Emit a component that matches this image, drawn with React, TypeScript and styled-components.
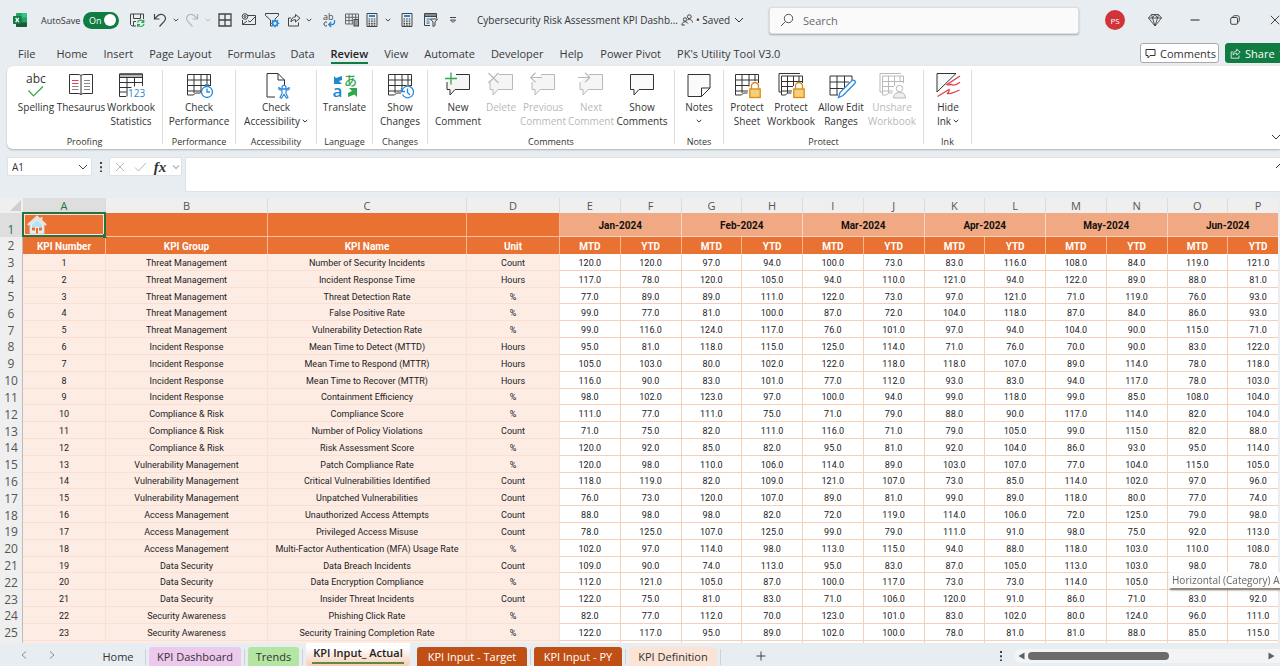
import React from "react";
import styled, { createGlobalStyle, css } from "styled-components";

const UI = `"Open Sans", "Noto Sans", sans-serif`;
const CELL = `Roboto, "Liberation Sans", sans-serif`;

const Global = createGlobalStyle`
  *, *::before, *::after { box-sizing: border-box; }
  body { margin: 0; overflow: hidden; }
  button, input { font: inherit; color: inherit; }
  button { border: 0; padding: 0; background: none; white-space: nowrap; }
  svg { display: block; flex: none; overflow: visible; }
`;

const Shell = styled.div`
  display: flex;
  flex-direction: column;
  height: 100vh;
  overflow: hidden;
  background: #e8edf1;
  color: #333;
  font-family: ${UI};
`;

/* ---------- title bar ---------- */

const TitleBar = styled.header`
  display: flex;
  align-items: center;
  flex: none;
  height: 40px;
  overflow: hidden;
  font-size: 10px;
`;

const ToolButton = styled.button<{ $w: number; $h?: number; $muted?: boolean }>`
  display: flex;
  align-items: center;
  justify-content: center;
  flex: none;
  width: ${(p) => p.$w}px;
  height: ${(p) => p.$h || 24}px;
  color: ${(p) => (p.$muted ? "#b4b8bb" : "#444")};
`;

const AutoSave = styled.label`
  display: flex;
  align-items: center;
  flex: none;
  width: 86px;
  font-size: 9px;
`;

const AutoSaveText = styled.span`
  width: 43px;
  padding-left: 1px;
`;

const Switch = styled.span`
  position: relative;
  display: flex;
  align-items: center;
  width: 36px;
  height: 17px;
  padding-left: 6px;
  border-radius: 9px;
  background: #107c41;
  color: #fff;
  &::after {
    content: "";
    width: 12px;
    height: 12px;
    margin-left: auto;
    margin-right: 3px;
    border-radius: 50%;
    background: #fff;
  }
  input {
    position: absolute;
    inset: 0;
    margin: 0;
    opacity: 0;
  }
`;

const DocTitle = styled.div`
  flex: none;
  width: 203px;
  margin-left: 11px;
  white-space: nowrap;
`;

const SavedButton = styled.button`
  display: flex;
  align-items: center;
  flex: none;
  gap: 4px;
  width: 66px;
  margin-left: 2px;
`;

const SearchBox = styled.label`
  display: flex;
  align-items: center;
  flex: 0 1 310px;
  gap: 9px;
  height: 27px;
  margin-left: 7px;
  padding: 0 10px;
  border: 1px solid #dcdfe2;
  border-radius: 3px;
  background: #fafafa;
  box-shadow: 0 1px 2px rgba(0, 0, 0, 0.3);
  color: #555;
  font-size: 11px;
  input {
    flex: 1;
    min-width: 0;
    padding: 0;
    border: 0;
    outline: 0;
    background: none;
  }
  input::placeholder { color: #6a6a6a; opacity: 1; }
`;

const WindowControls = styled.div`
  display: flex;
  flex: none;
  margin: 0 -15px 0 auto;
`;

const Avatar = styled.span`
  display: grid;
  place-items: center;
  width: 20px;
  height: 20px;
  border-radius: 50%;
  background: #d13438;
  color: #fff;
  font-size: 8px;
`;

/* ---------- ribbon tabs ---------- */

const TabRow = styled.nav`
  display: flex;
  align-items: center;
  flex: none;
  height: 26px;
  padding-left: 18px;
  overflow: hidden;
`;

const RibbonTab = styled.button<{ $active?: boolean; $gap: number }>`
  position: relative;
  flex: none;
  height: 24px;
  margin-right: ${(p) => p.$gap}px;
  line-height: 26px;
  font-size: 11px;
  font-weight: ${(p) => (p.$active ? 600 : 400)};
  color: ${(p) => (p.$active ? "#222" : "#3a3a3a")};
  ${(p) =>
    p.$active &&
    css`
      &::after {
        content: "";
        position: absolute;
        left: 0;
        right: 0;
        bottom: 1px;
        height: 2px;
        background: #107c41;
      }
    `}
`;

const TabActions = styled.div`
  display: flex;
  flex: none;
  gap: 6px;
  margin-left: auto;
  margin-right: -10px;
`;

const ActionButton = styled.button<{ $primary?: boolean }>`
  display: flex;
  align-items: center;
  gap: 4px;
  height: 20px;
  width: ${(p) => (p.$primary ? 65 : 79)}px;
  padding: 0 4px;
  border: 1px solid ${(p) => (p.$primary ? "#107c41" : "#a8a8a8")};
  border-radius: 3px;
  background: ${(p) => (p.$primary ? "#107c41" : "#fff")};
  color: ${(p) => (p.$primary ? "#fff" : "#333")};
  font-size: 11px;
`;

/* ---------- ribbon ---------- */

const Ribbon = styled.section`
  display: flex;
  flex: none;
  height: 83px;
  margin-left: 7px;
  border-radius: 6px 0 0 6px;
  background: #fff;
  box-shadow: 0 1px 2px rgba(0, 0, 0, 0.25);
`;

const Group = styled.div<{ $w: number }>`
  display: flex;
  flex-direction: column;
  justify-content: space-between;
  flex: none;
  position: relative;
  width: ${(p) => p.$w}px;
  padding-top: 6px;
  &::after {
    content: "";
    position: absolute;
    right: 0;
    top: 4px;
    bottom: 5px;
    width: 1px;
    background: #dcdcdc;
  }
`;

const GroupButtons = styled.div<{ $pad: number }>`
  display: flex;
  padding-left: ${(p) => p.$pad}px;
`;

const GroupName = styled.div`
  padding-right: 1px;
  text-align: center;
  font-size: 9px;
  line-height: 14px;
`;

const Command = styled.button<{ $w: number }>`
  display: flex;
  flex-direction: column;
  align-items: center;
  flex: none;
  width: ${(p) => p.$w}px;
  font-size: 10px;
  line-height: 14px;
  color: #333;
  &:disabled { color: #b9b9b9; }
`;

const CommandLine = styled.span`
  display: flex;
  align-items: center;
  gap: 2px;
  min-height: 14px;
`;

const RibbonEnd = styled.div`
  display: flex;
  align-items: flex-end;
  margin: 0 -1px 7px auto;
`;

/* ---------- formula bar ---------- */

const FormulaBar = styled.section`
  display: flex;
  flex: none;
  align-items: flex-start;
  margin-top: 8px;
  padding-left: 7px;
`;

const Field = styled.div<{ $w: number }>`
  display: flex;
  align-items: center;
  flex: none;
  width: ${(p) => p.$w}px;
  height: 19px;
  border: 1px solid #dfe2e5;
  border-radius: 2px;
  background: #fff;
`;

const NameInput = styled.input`
  flex: 1;
  min-width: 0;
  padding: 0 0 0 4px;
  border: 0;
  outline: 0;
  background: none;
  font-size: 10px;
`;

const FxButton = styled.button`
  width: 20px;
  font: italic 700 15px/16px "Liberation Serif", serif;
`;

const FormulaBox = styled.div`
  position: relative;
  display: flex;
  flex: 1;
  height: 35px;
  margin-left: 3px;
  border: 1px solid #dfe2e5;
  border-right: 0;
  border-radius: 2px 0 0 2px;
  background: #fff;
  input {
    flex: 1;
    border: 0;
    outline: 0;
    background: none;
    font-size: 11px;
  }
  button { align-self: flex-start; margin: 5px -5px 0 0; }
`;

/* ---------- sheet ---------- */

const SheetArea = styled.main`
  flex: 1;
  min-height: 0;
  margin: 6px 2px 0 0;
  overflow: hidden;
  background: #fff;
`;

const Sheet = styled.table`
  width: calc(100% + 11px);
  height: 100%;
  table-layout: fixed;
  border-collapse: separate;
  border-spacing: 0;
  font-family: ${CELL};
  font-size: 9px;
  line-height: 12px;
  color: #222;
  td, th { padding: 0; text-align: center; vertical-align: middle; white-space: nowrap; }
  tbody td, tbody th { padding-top: 2px; }
`;

const Col = styled.col<{ $w?: number }>`
  width: ${(p) => (p.$w ? `${p.$w}px` : "auto")};
`;

const ColHead = styled.th<{ $selected?: boolean }>`
  height: 15px;
  border-right: 1px solid #dcdcdc;
  background: ${(p) => (p.$selected ? "#dedede" : "#efefef")};
  color: ${(p) => (p.$selected ? "#217346" : "#555")};
  font: 400 11px/14px ${UI};
`;

const Corner = styled.th`
  background: #efefef;
  svg { margin: 0 2px 0 auto; }
`;

const RowHead = styled.th<{ $selected?: boolean }>`
  border-right: 1px solid #bdbdbd;
  background: ${(p) => (p.$selected ? "#dedede" : "#efefef")};
  color: ${(p) => (p.$selected ? "#217346" : "#555")};
  font: 400 12px/14px ${UI};
  &&& { vertical-align: ${(p) => (p.$selected ? "bottom" : "middle")}; }
`;

const Banner = styled.td`
  position: relative;
  height: 24px;
  border-right: 1px solid #f5b893;
  border-bottom: 1px solid #f5c4a6;
  background: #e97132;
  a { display: block; width: 20px; margin-left: 4px; }
`;

const Selection = styled.span`
  position: absolute;
  inset: -1px;
  border: 2px solid #217346;
  box-shadow: inset 0 0 0 1px #fbe3d6;
  &::after {
    content: "";
    position: absolute;
    right: -3px;
    bottom: -3px;
    width: 4px;
    height: 4px;
    background: #217346;
  }
`;

const Month = styled.th`
  height: 24px;
  border-right: 1px solid #f9d6c2;
  border-bottom: 1px solid #f9d6c2;
  background: #f1a983;
  color: #111;
  font-size: 10px;
  &&& { padding-top: 2px; }
`;

const FieldHead = styled.th`
  height: 17px;
  border-right: 1px solid #f5b893;
  background: #e97132;
  color: #fff;
  font-size: 10px;
  &&& { padding-top: 2px; }
`;

const Label = styled.td`
  border-right: 1px solid #fbe0d2;
  border-bottom: 1px solid #fbe0d2;
  background: #fdece4;
`;

const Value = styled.td`
  border-right: 1px solid #f7ceb6;
  border-bottom: 1px solid #f7ceb6;
`;

const Stub = styled.tr`
  height: 2px;
  font-size: 0;
  line-height: 0;
  &&& > * { padding: 0; border-bottom: 0; }
`;

const Tooltip = styled.div`
  position: fixed;
  left: calc(100vw - 111px);
  bottom: 78px;
  width: 130px;
  padding-left: 3px;
  background: #fcfcfc;
  box-shadow: 1px 2px 2px rgba(0, 0, 0, 0.5);
  color: #666;
  font-size: 10px;
  line-height: 16px;
  white-space: nowrap;
`;

/* ---------- sheet tabs ---------- */

const BottomBar = styled.footer`
  display: flex;
  align-items: flex-end;
  flex: none;
  height: 23px;
  padding-left: 10px;
  overflow: hidden;
`;

const NavArrow = styled.button`
  display: grid;
  place-items: center;
  width: 28px;
  height: 22px;
  color: #8a8f94;
`;

const SheetTabs = styled.div`
  display: flex;
  align-items: flex-end;
  gap: 7px;
  margin-left: 28px;
`;

const SheetTab = styled.button<{ $w: number; $bg?: string; $fg?: string }>`
  position: relative;
  width: ${(p) => p.$w}px;
  height: 19px;
  border-radius: 3px 3px 0 0;
  background: ${(p) => p.$bg || "transparent"};
  color: ${(p) => p.$fg || "#333"};
  font-size: 11px;
  line-height: 19px;
  &::after {
    content: "";
    position: absolute;
    right: -4px;
    top: 2px;
    bottom: 1px;
    width: 1px;
    background: #cdd2d7;
  }
`;

const ActiveSheetTab = styled.button`
  width: 104px;
  height: 23px;
  padding: 1px 6px 2px;
  border-radius: 0 0 4px 4px;
  background: linear-gradient(#fff 20%, #f6cdb6);
  color: #222;
  font-size: 11px;
  font-weight: 600;
  line-height: 18px;
  span {
    display: block;
    border-bottom: 2px solid #5f8a3c;
  }
`;

const ScrollArea = styled.div`
  display: flex;
  align-items: flex-end;
  justify-content: flex-end;
  flex: 1;
`;

const ScrollTrack = styled.div`
  display: flex;
  align-items: center;
  flex: 0 1 266px;
  height: 14px;
  margin-bottom: 3px;
  padding: 0 5px 0 4px;
  border-radius: 7px 0 0 7px;
  background: #f3f4f5;
  color: #606060;
`;

const ScrollThumb = styled.div`
  width: 55%;
  height: 8px;
  margin: 0 auto 0 3px;
  border-radius: 4px;
  background: #6b6b6b;
`;

/* ---------- icons ---------- */

type P = { children: React.ReactNode; w?: number; h?: number; vb?: string };
const Svg = ({ children, w = 16, h = 16, vb }: P) => (
  <svg width={w} height={h} viewBox={vb || `0 0 ${w} ${h}`} fill="none" stroke="currentColor" strokeWidth="1" aria-hidden="true">
    {children}
  </svg>
);
const Big = ({ children }: { children: React.ReactNode }) => (
  <Svg w={28} h={28}>{children}</Svg>
);

const Caret = ({ w = 6 }: { w?: number }) => (
  <Svg w={w} h={w} vb="0 0 6 6"><path d="M.7 1.8 3 4.1 5.3 1.8" /></Svg>
);
const Chevron = () => <Svg w={10} h={10}><path d="M1 3l4 4 4-4" /></Svg>;

const ExcelIcon = () => (
  <Svg w={14} h={14}>
    <g stroke="none">
      <rect x="3" y="0" width="11" height="14" rx="1" fill="#21a366" />
      <path d="M8.500 0H13a1 1 0 0 1 1 1v3.500H8.500z" fill="#33c481" />
      <path d="M3 4.500h5.500v5H3z" fill="#107c41" />
      <path d="M8.500 9.500H14V13a1 1 0 0 1-1 1H4a1 1 0 0 1-1-1V9.500z" fill="#185c37" />
      <rect x="0" y="3" width="8.500" height="8" rx=".8" fill="#107c41" />
    </g>
    <path d="M2.600 4.800 5.900 9.200M5.900 4.800 2.600 9.200" stroke="#fff" strokeWidth="1.300" />
  </Svg>
);
const SaveIcon = () => (
  <Svg>
    <path d="M7 14H3L1.500 12.500V2h13v5M4.500 2v4.500h7V2M4.500 14V9.500H7" />
    <path d="M8.500 10.500a3.200 3.200 0 0 1 6-.5M14.800 7.800V10.300h-2.500M15 12a3.200 3.200 0 0 1-6 .7M8.600 15v-2.500H11" stroke="#2fa84f" strokeWidth="1.200" />
  </Svg>
);
const UndoIcon = () => (
  <Svg><path d="M2.500 2v5h5M2.800 6.700 6 3.500c2-1.800 4.800-1.500 6.300.2 1.500 1.800 1.300 4.300-.3 6L7.500 14.500" strokeWidth="1.200" /></Svg>
);
const RedoIcon = () => (
  <Svg><path d="M13.500 2v5h-5M13.200 6.700 10 3.500C8 1.700 5.200 2 3.700 3.700 2.200 5.500 2.400 8 4 9.700l4.500 4.800" strokeWidth="1.200" /></Svg>
);
const BordersIcon = () => (
  <Svg w={14} h={14}><path d="M1 1h12v12H1zM7 1v12M1 7h12" strokeWidth="1.300" /></Svg>
);
const MailIcon = () => (
  <Svg>
    <path d="M7 3.500h7.500v9h-13V8M7 8.500l2 1.500 5.500-5.500M1.500 12.500 6 9" />
    <circle cx="4" cy="4.500" r="2.800" /><circle cx="4" cy="4.500" r="1" />
  </Svg>
);
const FilterIcon = () => (
  <Svg>
    <path d="M8 14H6.500V8L1.500 3.500v-2h13v2L11 7" />
    <circle cx="11" cy="11.300" r="2.400" stroke="#2b88d8" strokeWidth="1.600" />
    <path d="M11 7v1.500M11 14v1.600M6.800 11.300h1.500M13.700 11.300h1.600M8 8.300l1 1M13 13.300l1 1M14 8.300l-1 1M9 13.300l-1 1" stroke="#2b88d8" strokeWidth="1.300" />
  </Svg>
);
const ShareIcon = ({ s = 14 }: { s?: number }) => (
  <Svg w={s} h={s} vb="0 0 14 14">
    <path d="M4 5H1.500v8h10V9.500M8.500 1.500v2.300C5.500 4 4 6 4 9c1-1.700 2.500-2.400 4.500-2.300V9l4.500-3.800z" strokeLinejoin="round" />
  </Svg>
);
const AbcIcon = () => (
  <Svg>
    <g stroke="none" fill="currentColor" fontFamily="Open Sans" fontSize="9"><text x="2" y="8">ab</text></g>
    <path d="M6 10.300a2 2 0 1 0 0 3.400" />
    <path d="M13.500 8v2q0 2.500-2.500 2.500H8M10.200 10 7.700 12.500l2.500 2.500" stroke="#2b88d8" strokeWidth="1.300" />
  </Svg>
);
const SheetIcon = () => (
  <Svg>
    <path d="M1.500 2h13v5M1.500 2v10H9M1.500 5.300h13M1.500 8.600H9M5 2v10M8.300 2v10M11.600 2v5" stroke="#666" />
    <rect x="10" y="7.500" width="4.500" height="6.500" fill="#999" />
  </Svg>
);
const CalcIcon = () => (
  <Svg w={12} h={14}>
    <path d="M1 .5h10v13H1z" />
    <path d="M3 3h6" stroke="#2b88d8" strokeWidth="2" />
    <path d="M2.500 6h7M2.500 8.200h7M2.500 10.400h7M2.500 12.200h7" strokeWidth="1.200" strokeDasharray="1.600 1" />
  </Svg>
);
const FormIcon = () => (
  <Svg>
    <path d="M7 13.500H1.500v-12h12V6M1.500 4.500h12" /><path d="M2 3h11" strokeWidth="2" opacity=".6" />
    <path d="M3.500 7h4M3.500 9h3" stroke="#2b88d8" /><path d="M3.500 11h3" />
    <path d="M7.500 7h7l-2.500 3v3.500l-2 1V10z" fill="#e8edf1" />
  </Svg>
);
const MoreIcon = () => <Svg w={8} h={8}><path d="M1 1.500h6M1.500 4 4 6.500 6.500 4z" /></Svg>;
const PeopleIcon = () => (
  <Svg w={12} h={12}>
    <circle cx="4" cy="5.500" r="1.700" /><path d="M.8 11c.3-2.300 1.500-3.200 3.200-3.200S6.500 8.500 7 9.500M.8 11h3" />
    <circle cx="8.300" cy="2.700" r="1.900" /><path d="M6.500 6c1.800-1.200 4.600-.7 5 2.500" />
  </Svg>
);
const SearchIcon = () => (
  <Svg w={14} h={14}><circle cx="8.500" cy="5.500" r="4.200" /><path d="M5.500 8.500 1 13" /></Svg>
);
const DiamondIcon = () => (
  <Svg w={14} h={14}><path d="M3.500 1.500h7L13.500 5 7 13 .5 5zM.5 5h13M3.500 1.500 4.500 5 7 13 9.500 5l1-3.500M4.500 5 7 1.500 9.500 5" strokeWidth=".9" /></Svg>
);
const MinIcon = () => <Svg w={10} h={10}><path d="M.5 5h9" strokeWidth="1.200" /></Svg>;
const RestoreIcon = () => (
  <Svg w={10} h={10}><rect x=".7" y="2.500" width="6.800" height="6.800" rx="1.300" /><path d="M2.800 2.500V2q.2-1.300 1.500-1.300h3.200q1.800 0 1.800 1.800v3.200q0 1.300-1.800 1.500" /></Svg>
);
const CloseIcon = () => <Svg w={10} h={10}><path d="M.8.8l8.400 8.400M9.200.8.8 9.200" /></Svg>;
const CommentIcon = () => (
  <Svg w={11} h={11}><path d="M1 1.500h9v6H5L3 9.800V7.500H1z" strokeLinejoin="round" /></Svg>
);

const SpellingIcon = () => (
  <Big>
    <text x="14" y="11" textAnchor="middle" stroke="none" fill="currentColor" fontFamily="Open Sans" fontSize="12">abc</text>
    <path d="M6.500 18.500 11.500 24 21 14.500" stroke="#2fa84f" strokeWidth="1.200" />
  </Big>
);
const ThesaurusIcon = () => (
  <Big>
    <path d="M14 3.500q-1-1-3-1H2.500v19H11q2 0 3 1 1-1 3-1h8.500v-19H17q-2 0-3 1v19" />
    <path d="M5 8.500h6.500M5 11.500h6.500" stroke="#e0405a" strokeWidth="1.200" />
    <path d="M5 14.500h6.500M5 17.500h6.500M17 8.500h6M17 11.500h6M17 14.500h6M17 17.500h6" stroke="#888" />
  </Big>
);
const StatsIcon = () => (
  <Big>
    <path d="M2.500 2h23v3.500h-23z" fill="#b9b9b9" />
    <path d="M9 24.500H2.500V2h23v12M2.500 10.500h23M2.500 15.500h12M2.500 20h7M10 5.500v19M17.500 5.500v9" />
    <text x="11" y="25" stroke="none" fill="#2b88d8" fontFamily="Open Sans" fontSize="10">123</text>
  </Big>
);
const Grid = () => (
  <path d="M2.500 2.500h23M2.500 8h23M2.500 13.500h23M2.500 19H16M2.500 2.500V23h6l2-2h5M9 2.500V21M16 2.500V21M22 2.500V13M25.500 2.500V14" />
);
const PerfIcon = () => (
  <Big><Grid /><g stroke="#2b88d8" strokeWidth="1.300"><circle cx="22" cy="20" r="5.500" fill="#fff" /><path d="M22 16.500V20h3M20 12.800h4M22 13v1.500" /></g></Big>
);
const AccessIcon = () => (
  <Big>
    <path d="M13 25H5V1.500h11L22.500 8v5M16 1.500V8h6.500" />
    <g stroke="#2b88d8" strokeWidth="1.200" fill="#fff"><circle cx="22" cy="15.300" r="2" /><path d="M16.800 15.500 17 17.500l3 1v3l-2 4 1.500.8 2.500-4 2.500 4L26 25.500l-2-4v-3l3-1 .2-2-3 1.700h-4.400z" strokeLinejoin="round" /></g>
  </Big>
);
const TranslateIcon = () => (
  <Big>
    <g stroke="none">
      <text x="1.500" y="25" fill="#1e88d2" fontFamily="Open Sans" fontWeight="600" fontSize="17">a</text>
      <text x="13" y="13" fill="#2fa84f" fontFamily="Noto Sans CJK JP" fontWeight="500" fontSize="13">あ</text>
      <path d="M3 4l2 2 6-2v4L8 9l3 3H3z" fill="#1e88d2" />
      <path d="M26 16v9l-2.500-2.500L17 25v-4l4-2-3-3z" fill="#2fa84f" />
    </g>
  </Big>
);
const ChangesIcon = () => (
  <Big><Grid /><g stroke="#2b88d8" strokeWidth="1.300"><circle cx="21.500" cy="20" r="6.500" fill="#fff" stroke="none" /><path d="M15.500 16v3.500H19M16 19a5.800 5.800 0 1 1 .5 3.500M21.500 16.500v4l2.500 2.500" /></g></Big>
);
const Bubble = ({ mark }: { mark?: "plus" | "x" | "left" | "right" }) => (
  <Big>
    <path d={mark ? "M12 2.500h13.500v15H11L6 23v-5.500H3V10" : "M2.500 2.500h23v15H11L6 23v-5.500H2.500z"} fill={mark ? "#f5f5f5" : "#fafafa"} />
    {mark === "plus" && <path d="M1 6.500h12M7 .5v12" stroke="#2fa84f" strokeWidth="1.300" />}
    {mark === "x" && <path d="M1.500 1l10 10M11.500 1l-10 10" strokeWidth="1.200" />}
    {mark === "left" && <path d="M13 5.500H1.500M6.500.8 1.700 5.500 6.500 10.300" strokeWidth="1.200" />}
    {mark === "right" && <path d="M1 5.500h12M8 .8l4.800 4.700L8 10.300" strokeWidth="1.200" />}
  </Big>
);
const NotesIcon = () => (
  <Big><path d="M3 2.500h22V16l-8.500 8.500H3zM25 16h-8.500v8.500" fill="#fafafa" /></Big>
);
const Lock = () => (
  <g stroke="#d98a1c" strokeWidth="1.300"><path d="M18.500 17v-3a3.500 3.500 0 0 1 7 0v3" /><rect x="16.800" y="17" width="10.400" height="8.500" fill="#f7cf75" /></g>
);
const ProtectSheetIcon = () => (
  <Big><path d="M2.500 2.500h23V11M2.500 2.500V23h6l2-2h4M2.500 8h23M2.500 13.500H16M2.500 19H15M9 2.500V21M16 2.500v12M22 2.500V9" /><Lock /></Big>
);
const BookGrid = () => (
  <path d="M2 20V1.500h21M2 20h2.500M4.500 4h21v7M4.500 4v19h4l2-2h4M4.500 9.500h21M4.500 14.500H16M4.500 19H15M10.500 4v17M16.500 4v10M22 4v6" />
);
const ProtectBookIcon = () => <Big><BookGrid /><Lock /></Big>;
const RangesIcon = () => (
  <Big>
    <path d="M3 4h22v4M3 4v19h8M3 10h19M3 16.500h14M10 4v19M17.500 4v12" />
    <path d="M11.500 25.500l1.500-5L25 8.500q1.500-1 2.800.3 1.200 1.300 0 2.700L16 23.500z" fill="#fff" stroke="#2b88d8" strokeWidth="1.300" />
  </Big>
);
const UnshareIcon = () => (
  <Big><BookGrid /><circle cx="21.500" cy="16.500" r="3.200" fill="#fff" /><path d="M15.500 26c0-3.500 2-5.500 6-5.500s6 2 6 5.500z" fill="#eee" /></Big>
);
const InkIcon = () => (
  <Big>
    <path d="M3 1.500h19L3 20z" fill="#f7f7f7" />
    <path d="M26 4 13 12.500q3 .8 4-.3 3 2.500 9-2M3.500 24.500 15 17.500q1 .8-1.500 4 4 .5 12-3.500" stroke="#e0404a" strokeWidth="1.300" />
  </Big>
);

const HouseIcon = () => (
  <svg width="20" height="19" viewBox="0 0 20 19" aria-hidden="true">
    <path d="M3 9v9.500h14V9L10 3z" fill="#e3f1f7" stroke="#d8d8d8" />
    <path d="M5 9.500 10 5l5 4.500V12H5z" fill="#b8e4f2" />
    <path d="M.8 10 10 1.500 19.200 10M14.500 2v4" fill="none" stroke="#e8e4e0" strokeWidth="1.800" />
    <path d="M5 12.500h3v3H5zM12 12.500h3v3h-3z" fill="#e97132" /><path d="M9 13h2v5.500H9z" fill="#e97132" />
  </svg>
);

/* ---------- data ---------- */

const tabs: [string, number][] = [
  ["File", 21], ["Home", 16], ["Insert", 16], ["Page Layout", 16], ["Formulas", 15], ["Data", 16],
  ["Review", 16], ["View", 16], ["Automate", 16], ["Developer", 16], ["Help", 17], ["Power Pivot", 16],
  ["PK's Utility Tool V3.0", 0],
];

type Cmd = { w: number; icon: React.ReactNode; lines: string[]; caret?: boolean; off?: boolean };
const groups: { name: string; w: number; pad: number; items: Cmd[] }[] = [
  { name: "Proofing", w: 156, pad: 7, items: [
    { w: 44, icon: <SpellingIcon />, lines: ["Spelling"] },
    { w: 46, icon: <ThesaurusIcon />, lines: ["Thesaurus"] },
    { w: 54, icon: <StatsIcon />, lines: ["Workbook", "Statistics"] },
  ] },
  { name: "Performance", w: 73, pad: 0, items: [{ w: 72, icon: <PerfIcon />, lines: ["Check", "Performance"] }] },
  { name: "Accessibility", w: 81, pad: 0, items: [{ w: 80, icon: <AccessIcon />, lines: ["Check", "Accessibility"], caret: true }] },
  { name: "Language", w: 56, pad: 0, items: [{ w: 55, icon: <TranslateIcon />, lines: ["Translate"] }] },
  { name: "Changes", w: 55, pad: 0, items: [{ w: 54, icon: <ChangesIcon />, lines: ["Show", "Changes"] }] },
  { name: "Comments", w: 247, pad: 7, items: [
    { w: 46, icon: <Bubble mark="plus" />, lines: ["New", "Comment"] },
    { w: 40, icon: <Bubble mark="x" />, lines: ["Delete"], off: true },
    { w: 44, icon: <Bubble mark="left" />, lines: ["Previous", "Comment"], off: true },
    { w: 52, icon: <Bubble mark="right" />, lines: ["Next", "Comment"], off: true },
    { w: 50, icon: <Bubble />, lines: ["Show", "Comments"] },
  ] },
  { name: "Notes", w: 49, pad: 0, items: [{ w: 48, icon: <NotesIcon />, lines: ["Notes", ""], caret: true }] },
  { name: "Protect", w: 200, pad: 3, items: [
    { w: 40, icon: <ProtectSheetIcon />, lines: ["Protect", "Sheet"] },
    { w: 48, icon: <ProtectBookIcon />, lines: ["Protect", "Workbook"] },
    { w: 52, icon: <RangesIcon />, lines: ["Allow Edit", "Ranges"] },
    { w: 50, icon: <UnshareIcon />, lines: ["Unshare", "Workbook"], off: true },
  ] },
  { name: "Ink", w: 48, pad: 0, items: [{ w: 48, icon: <InkIcon />, lines: ["Hide", "Ink"], caret: true }] },
];

const months = ["Jan-2024", "Feb-2024", "Mar-2024", "Apr-2024", "May-2024", "Jun-2024"];
const T = "Threat Management", I = "Incident Response", C = "Compliance & Risk", V = "Vulnerability Management";
const A = "Access Management", D = "Data Security", S = "Security Awareness";

const rows: [string, string, string, string][] = [
  [T, "Number of Security Incidents", "Count", "120 120 97 94 100 73 83 116 108 84 119 121"],
  [T, "Incident Response Time", "Hours", "117 78 120 105 94 110 121 94 122 89 88 81"],
  [T, "Threat Detection Rate", "%", "77 89 89 111 122 73 97 121 71 119 76 93"],
  [T, "False Positive Rate", "%", "99 77 81 100 87 72 104 118 87 84 86 93"],
  [T, "Vulnerability Detection Rate", "%", "99 116 124 117 76 101 97 94 104 90 115 71"],
  [I, "Mean Time to Detect (MTTD)", "Hours", "95 81 118 115 125 114 71 76 70 90 83 122"],
  [I, "Mean Time to Respond (MTTR)", "Hours", "105 103 80 102 122 118 118 107 89 114 78 118"],
  [I, "Mean Time to Recover (MTTR)", "Hours", "116 90 83 101 77 112 93 83 94 117 78 103"],
  [I, "Containment Efficiency", "%", "98 102 123 97 100 94 99 118 99 85 108 104"],
  [C, "Compliance Score", "%", "111 77 111 75 71 79 88 90 117 114 82 104"],
  [C, "Number of Policy Violations", "Count", "71 75 82 111 116 71 79 105 99 115 82 88"],
  [C, "Risk Assessment Score", "%", "120 92 85 82 95 81 92 104 86 93 95 114"],
  [V, "Patch Compliance Rate", "%", "120 98 110 106 114 89 103 107 77 104 115 105"],
  [V, "Critical Vulnerabilities Identified", "Count", "118 119 82 109 121 107 73 85 114 102 97 96"],
  [V, "Unpatched Vulnerabilities", "Count", "76 73 120 107 89 81 99 89 118 80 77 74"],
  [A, "Unauthorized Access Attempts", "Count", "88 98 98 82 72 119 114 106 72 125 79 98"],
  [A, "Privileged Access Misuse", "Count", "78 125 107 125 99 79 111 91 98 75 92 113"],
  [A, "Multi-Factor Authentication (MFA) Usage Rate", "%", "102 97 114 98 113 115 94 88 118 103 110 108"],
  [D, "Data Breach Incidents", "Count", "109 90 74 113 95 83 87 105 113 103 98 78"],
  [D, "Data Encryption Compliance", "%", "112 121 105 87 100 117 73 73 114 105 - -"],
  [D, "Insider Threat Incidents", "Count", "122 75 81 83 71 106 120 91 86 71 83 92"],
  [S, "Phishing Click Rate", "%", "82 77 112 70 123 101 83 102 80 124 96 111"],
  [S, "Security Training Completion Rate", "%", "122 117 95 89 102 100 78 81 81 88 85 115"],
];

export default function App() {
  return (
    <Shell>
      <Global />
      <TitleBar>
        <ToolButton $w={40} aria-label="Excel"><ExcelIcon /></ToolButton>
        <AutoSave>
          <AutoSaveText>AutoSave</AutoSaveText>
          <Switch>On<input type="checkbox" defaultChecked /></Switch>
        </AutoSave>
        <ToolButton $w={22} aria-label="Save"><SaveIcon /></ToolButton>
        <ToolButton $w={24} aria-label="Undo"><UndoIcon /></ToolButton>
        <ToolButton $w={8} aria-label="Undo list"><Caret /></ToolButton>
        <ToolButton $w={24} $muted aria-label="Redo"><RedoIcon /></ToolButton>
        <ToolButton $w={8} $muted aria-label="Redo list"><Caret /></ToolButton>
        <ToolButton $w={26} aria-label="Borders"><BordersIcon /></ToolButton>
        <ToolButton $w={22} aria-label="Email"><MailIcon /></ToolButton>
        <ToolButton $w={24} aria-label="Filter"><FilterIcon /></ToolButton>
        <ToolButton $w={20} aria-label="Share"><ShareIcon /></ToolButton>
        <ToolButton $w={10} aria-label="Share list"><Caret /></ToolButton>
        <ToolButton $w={30} aria-label="Replace"><AbcIcon /></ToolButton>
        <ToolButton $w={16} aria-label="Sheet"><SheetIcon /></ToolButton>
        <ToolButton $w={24} aria-label="Calculate"><CalcIcon /></ToolButton>
        <ToolButton $w={8} aria-label="Calculate list"><Caret /></ToolButton>
        <ToolButton $w={30} aria-label="Calculate sheet"><CalcIcon /></ToolButton>
        <ToolButton $w={18} aria-label="Form"><FormIcon /></ToolButton>
        <ToolButton $w={26} aria-label="Customize"><MoreIcon /></ToolButton>
        <DocTitle>Cybersecurity Risk Assessment KPI Dashb...</DocTitle>
        <ToolButton $w={14} aria-label="Sharing"><PeopleIcon /></ToolButton>
        <SavedButton>• Saved <Chevron /></SavedButton>
        <SearchBox>
          <SearchIcon />
          <input type="search" placeholder="Search" aria-label="Search" />
        </SearchBox>
        <WindowControls>
          <ToolButton $w={40} aria-label="Account"><Avatar>PS</Avatar></ToolButton>
          <ToolButton $w={40} aria-label="Premium"><DiamondIcon /></ToolButton>
          <ToolButton $w={40} aria-label="Minimize"><MinIcon /></ToolButton>
          <ToolButton $w={40} aria-label="Restore"><RestoreIcon /></ToolButton>
          <ToolButton $w={40} aria-label="Close"><CloseIcon /></ToolButton>
        </WindowControls>
      </TitleBar>

      <TabRow>
        {tabs.map(([name, gap]) => (
          <RibbonTab key={name} $gap={gap} $active={name === "Review"}>{name}</RibbonTab>
        ))}
        <TabActions>
          <ActionButton><CommentIcon />Comments</ActionButton>
          <ActionButton $primary><ShareIcon s={11} />Share <Caret /></ActionButton>
        </TabActions>
      </TabRow>

      <Ribbon>
        {groups.map((g) => (
          <Group key={g.name} $w={g.w}>
            <GroupButtons $pad={g.pad}>
              {g.items.map((c) => (
                <Command key={c.lines.join()} $w={c.w} disabled={c.off}>
                  {c.icon}
                  {c.lines.map((line, i) => (
                    <CommandLine key={i}>
                      {line}
                      {c.caret && i === c.lines.length - 1 && <Caret />}
                    </CommandLine>
                  ))}
                </Command>
              ))}
            </GroupButtons>
            <GroupName>{g.name}</GroupName>
          </Group>
        ))}
        <RibbonEnd><button aria-label="Ribbon options"><Chevron /></button></RibbonEnd>
      </Ribbon>

      <FormulaBar>
        <Field $w={85}>
          <NameInput defaultValue="A1" aria-label="Name box" />
          <ToolButton $w={16} $h={17} aria-label="Names"><Chevron /></ToolButton>
        </Field>
        <ToolButton as="span" $w={17} $h={19}>
          <Svg w={4} h={12}><path d="M2 1v10" strokeWidth="2" strokeDasharray="2 2.300" /></Svg>
        </ToolButton>
        <Field $w={73}>
          <ToolButton $w={20} $h={17} $muted aria-label="Cancel"><CloseIcon /></ToolButton>
          <ToolButton $w={20} $h={17} $muted aria-label="Enter"><Svg w={13} h={10}><path d="M1 5.500 4.500 9 12 1" /></Svg></ToolButton>
          <FxButton aria-label="Insert function">fx</FxButton>
          <ToolButton $w={11} $h={17} $muted aria-label="Functions"><Caret w={8} /></ToolButton>
        </Field>
        <FormulaBox>
          <input aria-label="Formula" />
          <button aria-label="Collapse"><Svg w={10} h={6}><path d="M1 5l4-4 4 4" /></Svg></button>
        </FormulaBox>
      </FormulaBar>

      <SheetArea>
        <Sheet>
          <colgroup>
            <Col $w={23} />
            <Col $w={83} />
            <Col $w={162} />
            <Col $w={199} />
            <Col $w={93} />
            {months.map((m) => <React.Fragment key={m}><Col /><Col /></React.Fragment>)}
          </colgroup>
          <thead>
            <tr>
              <Corner><Svg w={11} h={11}><path d="M11 0v11H0z" fill="#cfcfcf" stroke="none" /></Svg></Corner>
              {"ABCDEFGHIJKLMNOP".split("").map((c) => <ColHead key={c} $selected={c === "A"}>{c}</ColHead>)}
            </tr>
            <tr>
              <RowHead $selected>1</RowHead>
              <Banner><Selection /><a href="#home" aria-label="Home"><HouseIcon /></a></Banner>
              <Banner /><Banner /><Banner />
              {months.map((m) => <Month key={m} colSpan={2}>{m}</Month>)}
            </tr>
            <tr>
              <RowHead>2</RowHead>
              {["KPI Number", "KPI Group", "KPI Name", "Unit"].map((h) => <FieldHead key={h}>{h}</FieldHead>)}
              {months.map((m) => <React.Fragment key={m}><FieldHead>MTD</FieldHead><FieldHead>YTD</FieldHead></React.Fragment>)}
            </tr>
          </thead>
          <tbody>
            {rows.map(([group, name, unit, vals], i) => (
              <tr key={name}>
                <RowHead>{i + 3}</RowHead>
                <Label>{i + 1}</Label>
                <Label>{group}</Label>
                <Label>{name}</Label>
                <Label>{unit}</Label>
                {vals.split(" ").map((v, j) => <Value key={j}>{v === "-" ? "" : `${v}.0`}</Value>)}
              </tr>
            ))}
            <Stub>
              <RowHead />
              <Label /><Label /><Label /><Label />
              {months.map((m) => <React.Fragment key={m}><Value /><Value /></React.Fragment>)}
            </Stub>
          </tbody>
        </Sheet>
        <Tooltip role="tooltip">Horizontal (Category) Axis</Tooltip>
      </SheetArea>

      <BottomBar>
        <NavArrow aria-label="Previous sheet"><Svg w={6} h={8}><path d="M5 .5 1 4l4 3.500" /></Svg></NavArrow>
        <NavArrow aria-label="Next sheet"><Svg w={6} h={8}><path d="M1 .5 5 4 1 7.500" /></Svg></NavArrow>
        <SheetTabs>
          <SheetTab $w={48}>Home</SheetTab>
          <SheetTab $w={92} $bg="#eec9ee">KPI Dashboard</SheetTab>
          <SheetTab $w={51} $bg="#b4e5a2">Trends</SheetTab>
          <ActiveSheetTab><span>KPI Input_ Actual</span></ActiveSheetTab>
          <SheetTab $w={110} $bg="#c04f15" $fg="#fff">KPI Input - Target</SheetTab>
          <SheetTab $w={88} $bg="#c04f15" $fg="#fff">KPI Input - PY</SheetTab>
          <SheetTab $w={88} $bg="#fbe3d6">KPI Definition</SheetTab>
        </SheetTabs>
        <ToolButton $w={88} $h={20} aria-label="New sheet"><Svg w={10} h={10}><path d="M5 .5v9M.5 5h9" /></Svg></ToolButton>
        <ScrollArea>
          <ToolButton as="span" $w={26} $h={20}>
            <Svg w={4} h={12}><path d="M2 1v10" strokeWidth="2" strokeDasharray="2 2.300" /></Svg>
          </ToolButton>
          <ScrollTrack>
            <Svg w={7} h={8}><path d="M6.500.5v7L.5 4z" fill="currentColor" stroke="none" /></Svg>
            <ScrollThumb />
            <Svg w={7} h={8}><path d="M.5.5v7l6-3.500z" fill="currentColor" stroke="none" /></Svg>
          </ScrollTrack>
        </ScrollArea>
      </BottomBar>
    </Shell>
  );
}
